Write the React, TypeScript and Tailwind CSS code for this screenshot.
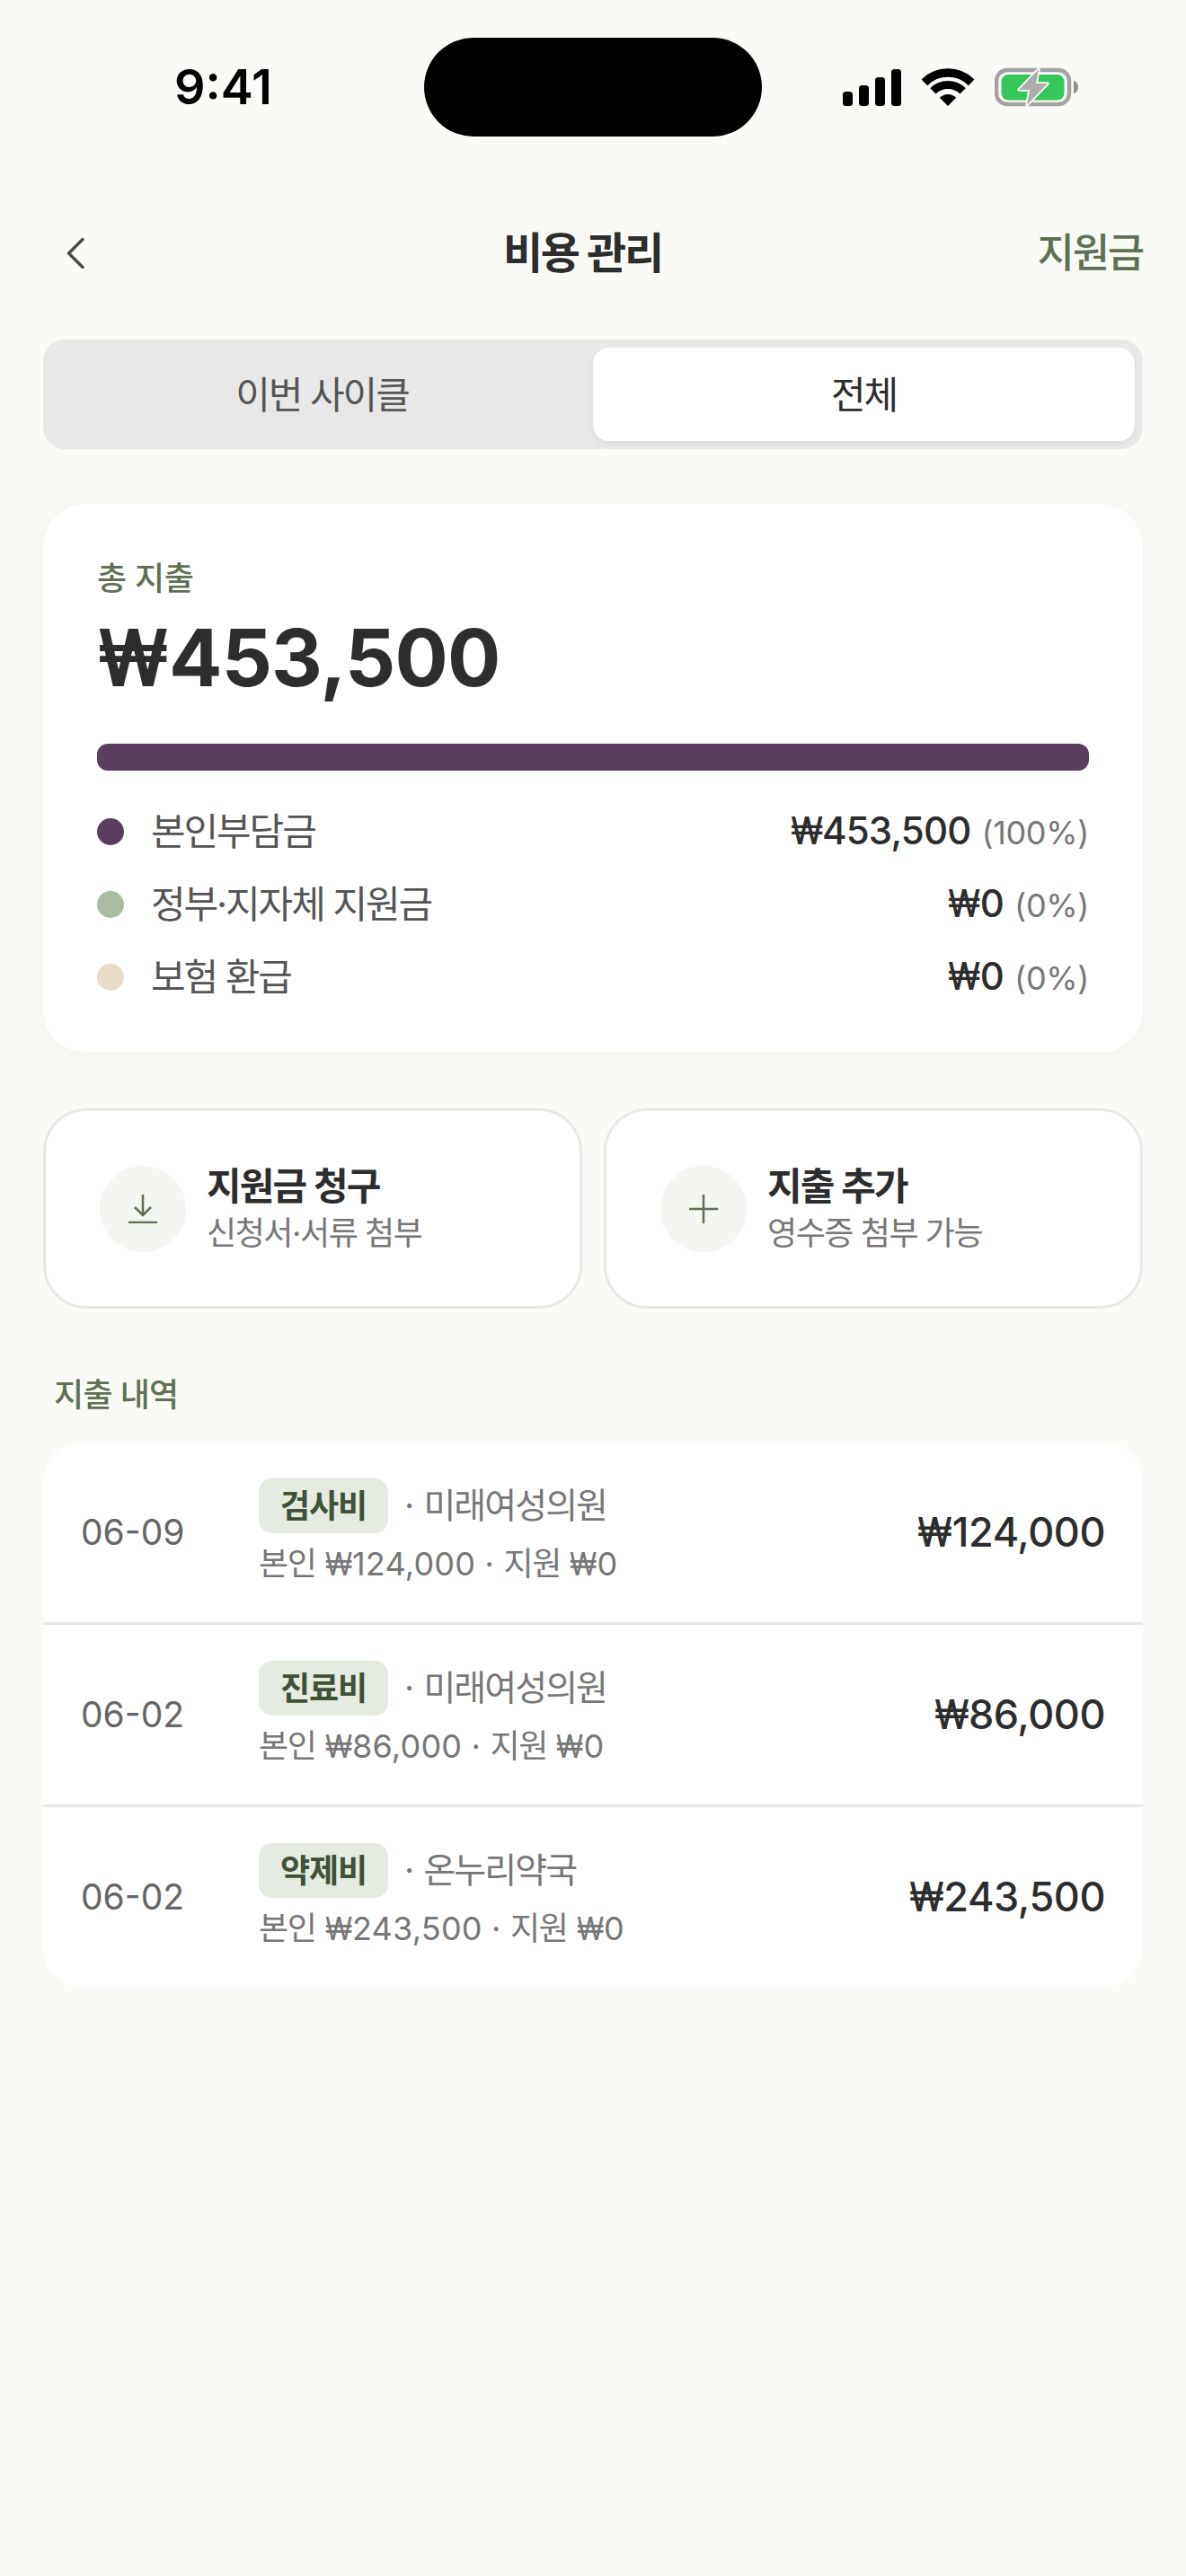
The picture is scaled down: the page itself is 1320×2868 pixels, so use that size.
import React from "react";

const FONT = "font-['Inter','Noto_Sans_CJK_KR',sans-serif]";

function Won() {
  return <span className="mr-[-0.12em] inline-block origin-left scale-x-[0.88]">₩</span>;
}

function Signal() {
  return (
    <svg width="65" height="41" viewBox="0 0 65 41" fill="#000">
      <rect x="0" y="25" width="11" height="16" rx="3.5" />
      <rect x="18" y="18" width="11" height="23" rx="3.5" />
      <rect x="36" y="9" width="11" height="32" rx="3.5" />
      <rect x="54" y="0" width="11" height="41" rx="3.5" />
    </svg>
  );
}

function Wifi() {
  return (
    <svg width="58" height="42" viewBox="0 0 58 42" fill="none">
      <path d="M2.84 15.84A37 37 0 0 1 55.16 15.84" stroke="#000" strokeWidth="9.5" />
      <path d="M12.4 25.4A23.5 23.5 0 0 1 45.6 25.4" stroke="#000" strokeWidth="9" />
      <path d="M29 42L19.8 32.8A13 13 0 0 1 38.2 32.8Z" fill="#000" />
    </svg>
  );
}

function Battery() {
  return (
    <svg width="93" height="44" viewBox="0 0 93 44" fill="none">
      <rect x="2" y="3" width="81" height="38" rx="12" stroke="#A3A3A3" strokeWidth="4.5" />
      <rect x="7.5" y="8" width="70" height="28.5" rx="8" fill="#34C759" />
      <path d="M88 15c3 .6 5 3 5 7s-2 6.400-5 7z" fill="#8F8F8F" />
      <path
        d="M49 2L27 25L39 25L36 42L59 18L46 18Z"
        fill="#ADADAD"
        stroke="#FAFBF7"
        strokeWidth="3.5"
        strokeLinejoin="round"
        paintOrder="stroke"
      />
    </svg>
  );
}

function LegendRow({ color, label, amount, pct }: { color: string; label: string; amount: string; pct: string }) {
  return (
    <div className="flex h-[81px] items-center justify-between">
      <div className="flex items-center gap-[30px]">
        <span className={`h-[30px] w-[30px] rounded-full ${color}`} />
        <span className="text-[42px] leading-[60px] tracking-[-0.05em] text-[#555555]">{label}</span>
      </div>
      <div className="flex items-baseline gap-[12px]">
        <span className="text-[42px] font-medium leading-[60px] tracking-[-0.02em] text-[#2D2D2D]">
          <Won />
          {amount}
        </span>
        <span className="text-[36px] leading-[60px] tracking-[-0.01em] text-[#777777]">{pct}</span>
      </div>
    </div>
  );
}

function ActionCard({ icon, title, sub }: { icon: React.ReactNode; title: string; sub: string }) {
  return (
    <div className="flex h-[223px] flex-1 items-center gap-[23px] rounded-[48px] border-[3px] border-[#E8E8E8] bg-white pl-[60px]">
      <div className="flex h-[96px] w-[96px] items-center justify-center rounded-full bg-[#F4F6F1]">{icon}</div>
      <div className="flex flex-col">
        <span className="text-[42px] font-semibold leading-[54px] tracking-[-0.045em] text-[#2D2D2D]">{title}</span>
        <span className="text-[36px] leading-[50px] tracking-[-0.04em] text-[#777777]">{sub}</span>
      </div>
    </div>
  );
}

function ExpenseRow({
  date,
  tag,
  place,
  own,
  gov,
  amount,
  rowClass,
}: {
  date: string;
  tag: string;
  place: string;
  own: string;
  gov: string;
  amount: string;
  rowClass: string;
}) {
  return (
    <div className={`flex items-center px-[42px] ${rowClass}`}>
      <span className="w-[198px] text-[39px] text-[#666666]">{date}</span>
      <div className="flex flex-1 flex-col gap-[9px]">
        <div className="flex items-center gap-[18px]">
          <span className="flex h-[61px] w-[144px] items-center justify-center rounded-[15px] bg-[#E5EBE0] text-[36px] font-semibold tracking-[-0.03em] text-[#3F5238]">
            {tag}
          </span>
          <span className="text-[39px] tracking-[-0.01em] text-[#777777]">
            · <span className="tracking-[-0.05em]">{place}</span>
          </span>
        </div>
        <span className="text-[36px] leading-[50px] tracking-[0.006em] text-[#777777]">
          <span className="tracking-[-0.04em]">본인</span> <Won />
          {own} · <span className="tracking-[-0.04em]">지원</span> <Won />
          {gov}
        </span>
      </div>
      <span className="text-[45px] font-medium tracking-[-0.01em] text-[#2D2D2D]">
        <Won />
        {amount}
      </span>
    </div>
  );
}

export default function App() {
  return (
    <div className={`${FONT} h-[2868px] w-[1320px] bg-[#FAFBF7]`}>
      <div className="flex h-[152px] items-start pt-[42px]">
        <div className="w-[472px] pl-[194px]">
          <span className="mt-[24px] block text-[54px] font-semibold leading-[62px] text-black">9:41</span>
        </div>
        <div className="h-[110px] w-[376px] rounded-[55px] bg-black" />
        <div className="mt-[33px] flex flex-1 items-center justify-end gap-[23px] pr-[120px]">
          <Signal />
          <Wifi />
          <Battery />
        </div>
      </div>

      <div className="mt-[76px] flex h-[108px] items-center justify-between pl-[74px] pr-[48px]">
        <svg width="20" height="34" viewBox="0 0 20 34" fill="none">
          <path d="M18 1.500L2.500 17L18 32.500" stroke="#4A4A4A" strokeWidth="3.5" strokeLinecap="round" strokeLinejoin="round" />
        </svg>
        <span className="ml-[48px] text-[48px] font-semibold tracking-[-0.05em] text-[#2D2D2D]">비용 관리</span>
        <span className="text-[45px] font-medium tracking-[-0.05em] text-[#5F7053]">지원금</span>
      </div>

      <div className="mx-[48px] mt-[42px] flex h-[122px] rounded-[24px] bg-[#E8E8E8] p-[9px]">
        <div className="flex flex-1 items-center justify-center text-[42px] tracking-[-0.05em] text-[#555555]">이번 사이클</div>
        <div className="flex w-[603px] items-center justify-center rounded-[18px] bg-white text-[42px] tracking-[-0.05em] text-[#2D2D2D] shadow-[0_3px_9px_rgba(0,0,0,0.05)]">
          전체
        </div>
      </div>

      <div className="mx-[48px] mt-[61px] h-[611px] rounded-[48px] bg-white px-[60px] pt-[60px] shadow-[0_6px_36px_rgba(0,0,0,0.04)]">
        <div className="text-[36px] font-medium leading-[46px] tracking-[-0.01em] text-[#5F7053]">총 지출</div>
        <div className="mt-[12px] text-[88px] font-bold leading-[106px] tracking-[-0.01em] text-[#2D2D2D]">
          <Won />
          453,500
        </div>
        <div className="mt-[43px] h-[30px] rounded-[12px] bg-[#5A3E5E]" />
        <div className="mt-[27px] flex flex-col">
          <LegendRow color="bg-[#5A3E5E]" label="본인부담금" amount="453,500" pct="(100%)" />
          <LegendRow color="bg-[#A9BBA0]" label="정부·지자체 지원금" amount="0" pct="(0%)" />
          <LegendRow color="bg-[#E8DCC8]" label="보험 환급" amount="0" pct="(0%)" />
        </div>
      </div>

      <div className="mx-[48px] mt-[62px] flex gap-[24px]">
        <ActionCard
          icon={
            <svg width="32" height="32" viewBox="0 0 32 32" fill="none" stroke="#5F7053" strokeWidth="2.500">
              <path d="M16 0V23M7 14L16 23L25 14M0 31H32" />
            </svg>
          }
          title="지원금 청구"
          sub="신청서·서류 첨부"
        />
        <ActionCard
          icon={
            <svg width="32" height="32" viewBox="0 0 32 32" fill="none" stroke="#5F7053" strokeWidth="2.500">
              <path d="M16 0V32M0 16H32" />
            </svg>
          }
          title="지출 추가"
          sub="영수증 첨부 가능"
        />
      </div>

      <div className="ml-[60px] mt-[72px] text-[36px] font-medium leading-[48px] tracking-[-0.02em] text-[#5F7053]">지출 내역</div>

      <div className="mx-[48px] mt-[29px] overflow-hidden rounded-[42px] bg-white">
        <ExpenseRow rowClass="h-[203px] border-b-[3px] border-[#E8E8E8]" date="06-09" tag="검사비" place="미래여성의원" own="124,000" gov="0" amount="124,000" />
        <ExpenseRow rowClass="h-[203px] border-b-[3px] border-[#E8E8E8]" date="06-02" tag="진료비" place="미래여성의원" own="86,000" gov="0" amount="86,000" />
        <ExpenseRow rowClass="h-[200px]" date="06-02" tag="약제비" place="온누리약국" own="243,500" gov="0" amount="243,500" />
      </div>
    </div>
  );
}
